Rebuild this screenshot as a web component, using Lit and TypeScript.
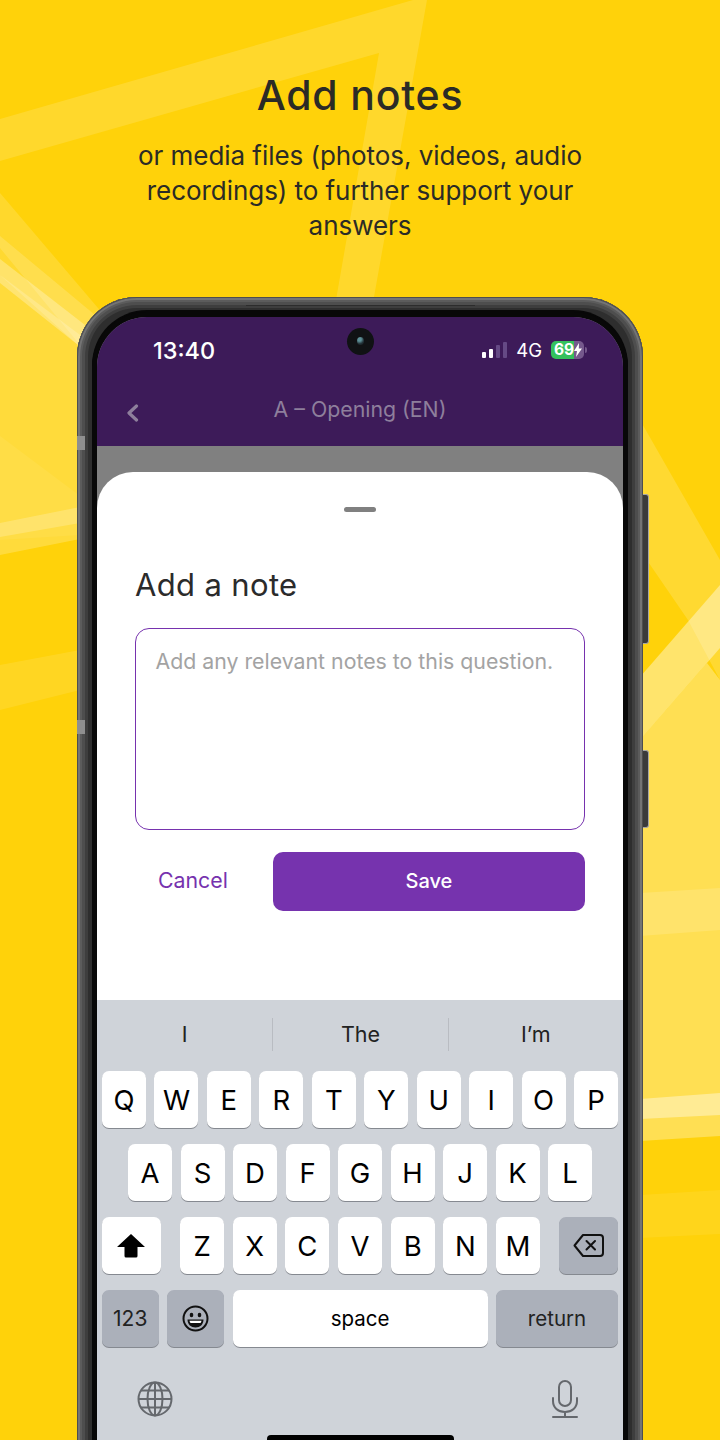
import { LitElement, html, css, svg } from "lit";
import { customElement } from "lit/decorators.js";

const ROW1 = ["Q", "W", "E", "R", "T", "Y", "U", "I", "O", "P"];
const ROW2 = ["A", "S", "D", "F", "G", "H", "J", "K", "L"];
const ROW3 = ["Z", "X", "C", "V", "B", "N", "M"];

const decor = svg`
  <g fill="#fff">
    <polygon opacity=".14" points="0,119 413,0 427,0 354,409 317,409 379,53 0,161"/>
    <polygon opacity=".14" points="0,193 184,409 133,409 0,248"/>
    <polygon opacity=".16" points="0,236 95,315 78,345 0,275"/>
    <polygon opacity=".28" points="0,259 85,325 78,345 0,283"/>
    <polygon opacity=".2" points="0,275 100,350 100,535 0,555"/>
    <polygon opacity=".06" points="0,436 80,496 80,535 0,540"/>
    <polygon opacity=".2" points="0,523 80,507 80,523 0,537"/>
    <polygon opacity=".1" points="0,665 80,650 80,690 0,710"/>
    <polygon opacity=".16" points="640,420 720,560 720,680 688,620 640,550"/>
    <polygon opacity=".4" points="640,677 720,585 720,648 640,740"/>
    <polygon opacity=".3" points="640,740 707,663 720,680 720,1136 640,1141"/>
    <polygon opacity=".14" points="640,893 720,888 720,930 640,936"/>
    <polygon opacity=".38" points="640,1099 720,1093 720,1115 640,1119"/>
    <polygon opacity=".07" points="640,1195 720,1190 720,1234 640,1238"/>
  </g>`;

@customElement("app-root")
export class AppRoot extends LitElement {
  static styles = css`
    :host {
      display: block;
      position: relative;
      width: 720px;
      height: 1440px;
      overflow: hidden;
      background: #ffd20a;
      font-family: "Inter", "Liberation Sans", sans-serif;
    }
    .decor { position: absolute; inset: 0; width: 720px; height: 1440px; }
    .intro {
      position: relative;
      height: 297px;
      box-sizing: border-box;
      padding-top: 70px;
      text-align: center;
      color: #2b2b26;
    }
    .intro h1 { margin: 0 0 18px; font-size: 41px; line-height: 50px; font-weight: 500; letter-spacing: 0.8px; }
    .intro p { margin: 0 auto; width: 480px; font-size: 26px; line-height: 35px; font-weight: 400; letter-spacing: -0.05px; }

    .phone {
      position: relative;
      margin-left: 77px;
      width: 566px;
      height: 1240px;
      box-sizing: border-box;
      padding: 20px 20px 0;
      border-radius: 60px;
      background: #2e2e2e;
      box-shadow:
        inset 0 0 0 1px #4e4e4e,
        inset 0 0 0 3px #747474,
        inset 0 0 0 5px #5c5c5c,
        inset 0 0 0 8px #4e4e4e,
        inset 0 0 0 11px #3e3e3e;
    }
    .btn-side { position: absolute; left: 566px; width: 5px; border: 1px solid #a5a5a5; border-left: 0; border-radius: 0 3px 3px 0; background: #3a3a3a; }
    .vol { top: 197px; height: 148px; }
    .pow { top: 453px; height: 76px; }
    .band { position: absolute; left: 0; width: 8px; height: 14px; background: #8f8f8f; }
    .b1 { top: 139px; }
    .b2 { top: 423px; }
    .seam { position: absolute; left: 169px; top: 8px; width: 229px; height: 1px; background: #2c2c2c; }

    .screen {
      position: relative;
      height: 100%;
      display: flex;
      flex-direction: column;
      border-radius: 50px 50px 0 0;
      background: #808080;
      box-shadow: 0 0 0 5px #080808, 0 -2px 0 5px #080808;
      overflow: hidden;
    }
    .top { background: #3d1b59; height: 129px; flex: none; }
    .status { display: flex; align-items: center; height: 66px; padding: 0 36px 0 56px; color: #fff; }
    .time { font-size: 23.5px; font-weight: 500; margin-right: auto; }
    .signal { display: flex; align-items: flex-end; gap: 3px; height: 16px; margin-right: 9px; }
    .signal i { display: block; width: 4px; border-radius: 1px; background: #fff; }
    .signal i.off { background: #69508a; opacity: .9; }
    .net { font-size: 18.5px; font-weight: 400; margin-right: 9px; }
    .batt {
      display: flex; align-items: center; width: 33px; height: 18px; box-sizing: border-box; padding-left: 3px;
      border-radius: 5px;
      background: linear-gradient(90deg, #34c15c 0 70%, #75598c 70% 100%);
      font-size: 15.5px; line-height: 18px; font-weight: 700; color: #fff;
    }
    .batt svg { flex: none; }
    .nub { width: 2px; height: 6px; margin-left: 1px; border-radius: 0 2px 2px 0; background: #75598c; }
    .nav { position: relative; display: flex; align-items: center; justify-content: center; height: 52px; color: #8e7f9c; font-size: 21.3px; }
    .back { position: absolute; left: 29px; top: 21px; }
    .camera { position: absolute; left: 249.500px; top: 11px; width: 27px; height: 27px; border-radius: 50%; background: #101214; }
    .camera::after { content: ""; position: absolute; left: 10px; top: 9px; width: 7px; height: 8px; border-radius: 50%; background: radial-gradient(circle at 35% 30%, #5d8f96 0 25%, #24343a 60%, transparent 100%); }

    .gap { height: 26px; flex: none; }
    .sheet {
      flex: none;
      height: 528px;
      box-sizing: border-box;
      padding: 35px 38px 0;
      background: #fff;
      border-radius: 36px 36px 0 0;
    }
    .handle { width: 32px; height: 5px; margin: 0 auto 53px; border-radius: 3px; background: #808080; }
    .sheet h2 { margin: 0 0 23px; font-size: 31px; line-height: 40px; font-weight: 400; color: #2b2b2b; letter-spacing: 0.35px; }
    .area {
      box-sizing: border-box;
      height: 202px;
      margin: 0 0 22px;
      padding: 18.500px 19.500px;
      border: 1.500px solid #7632ae;
      border-radius: 14px;
      font-size: 21.3px;
      line-height: 26px;
      color: #a3a3a3;
      white-space: nowrap;
    }
    .actions { display: flex; align-items: center; gap: 45px; }
    .cancel { margin-left: 23px; padding-bottom: 3px; font-size: 21.3px; color: #7632ae; }
    .save {
      flex: 1; height: 59px; box-sizing: border-box; padding-bottom: 2px; display: flex; align-items: center; justify-content: center;
      border-radius: 10px; background: #7633ae; color: #fff; font-size: 20px; font-weight: 500;
    }

    .kb { flex: 1; background: #cfd3d9; padding: 0 5px; color: #000; }
    .sugg { display: grid; grid-template-columns: repeat(3, 1fr); height: 71px; align-items: center; margin: 0 -5px; font-size: 21.5px; color: #222; text-align: center; }
    .sugg span { height: 33px; line-height: 33px; margin-top: -2px; }
    .sugg span + span { border-left: 1.500px solid #b9bcc2; }
    .row { display: flex; gap: 8.500px; height: 57px; margin-bottom: 16px; }
    .row.mid { padding: 0 26px; }
    .key {
      flex: 1 1 0; min-width: 0; display: flex; align-items: center; justify-content: center;
      border-radius: 7px; background: #fff; box-shadow: 0 1px 0 rgba(120,123,130,.85);
      font-size: 27.5px; font-weight: 400;
    }
    .key.mod { background: #abb0ba; }
    .shift { flex: none; width: 58.500px; margin-right: 11px; }
    .del { flex: none; width: 58.500px; margin-left: 11px; }
    .num { flex: none; width: 56.500px; font-size: 21px; color: #222; }
    .emoji { flex: none; width: 57px; }
    .space { flex: 1; font-size: 20.5px; }
    .ret { flex: none; width: 122px; font-size: 20.5px; color: #222; }
    .bottom { display: flex; justify-content: space-between; align-items: center; height: 40px; margin-top: 32px; padding: 0 39px 0 35px; }
    .home { width: 187px; height: 8px; margin: 16px auto 0; border-radius: 4px; background: #000; }
  `;

  private keys(list: string[]) {
    return list.map((k) => html`<div class="key">${k}</div>`);
  }

  render() {
    return html`
      <svg class="decor" viewBox="0 0 720 1440" aria-hidden="true">${decor}</svg>
      <header class="intro">
        <h1>Add notes</h1>
        <p>or media files (photos, videos, audio recordings) to further support your answers</p>
      </header>
      <div class="phone">
        <span class="btn-side vol"></span>
        <span class="btn-side pow"></span>
        <span class="band b1"></span>
        <span class="band b2"></span>
        <span class="seam"></span>
        <div class="screen">
          <div class="top">
            <div class="status">
              <span class="time">13:40</span>
              <span class="signal">
                <i style="height:6px"></i><i style="height:9px"></i><i class="off" style="height:13px"></i><i class="off" style="height:16px"></i>
              </span>
              <span class="net">4G</span>
              <span class="batt">69<svg width="8" height="14" viewBox="0 0 8 14"><path d="M5 0 0 8h3l-1 6 6-8.500H4.800z" fill="#fff"/></svg></span>
              <span class="nub"></span>
            </div>
            <div class="nav">
              <svg class="back" width="13" height="18" viewBox="0 0 13 18"><path d="M10.500 2 3 9l7.500 7" fill="none" stroke="#8e7f9c" stroke-width="3.200" stroke-linecap="round" stroke-linejoin="round"/></svg>
              A – Opening (EN)
            </div>
          </div>
          <span class="camera"></span>
          <div class="gap"></div>
          <section class="sheet">
            <div class="handle"></div>
            <h2>Add a note</h2>
            <div class="area">Add any relevant notes to this question.</div>
            <div class="actions">
              <span class="cancel">Cancel</span>
              <div class="save">Save</div>
            </div>
          </section>
          <section class="kb">
            <div class="sugg"><span>I</span><span>The</span><span>I’m</span></div>
            <div class="row">${this.keys(ROW1)}</div>
            <div class="row mid">${this.keys(ROW2)}</div>
            <div class="row">
              <div class="key shift">
                <svg width="30" height="25" viewBox="0 0 30 25"><path d="M15 1 1 14h7.500v9a1.500 1.500 0 0 0 1.500 1.500h10a1.500 1.500 0 0 0 1.500-1.500v-9H29z" fill="#000"/></svg>
              </div>
              ${this.keys(ROW3)}
              <div class="key mod del">
                <svg width="31" height="25" viewBox="0 0 31 25"><path d="M10 2h17a3 3 0 0 1 3 3v15a3 3 0 0 1-3 3H10L1.500 12.500z" fill="none" stroke="#111" stroke-width="2" stroke-linejoin="round"/><path d="m13.500 8 8.500 8.500M22 8l-8.500 8.500" stroke="#111" stroke-width="2" stroke-linecap="round"/></svg>
              </div>
            </div>
            <div class="row">
              <div class="key mod num">123</div>
              <div class="key mod emoji">
                <svg width="27" height="27" viewBox="0 0 27 27"><circle cx="13.500" cy="13.500" r="12" fill="none" stroke="#111" stroke-width="2"/><ellipse cx="9.500" cy="10" rx="1.800" ry="2.300" fill="#111"/><ellipse cx="17.500" cy="10" rx="1.800" ry="2.300" fill="#111"/><path d="M5.500 14.500h16c0 5-3.500 8-8 8s-8-3-8-8z" fill="#111"/><path d="M7.500 15.800h12c-.2 1-.5 1.600-1 2.200h-10c-.5-.6-.8-1.200-1-2.200z" fill="#fff"/></svg>
              </div>
              <div class="key space">space</div>
              <div class="key mod ret">return</div>
            </div>
            <div class="bottom">
              <svg width="36" height="36" viewBox="0 0 36 36" fill="none" stroke="#65686d" stroke-width="2"><circle cx="18" cy="18" r="16.500"/><ellipse cx="18" cy="18" rx="7.500" ry="16.500"/><path d="M18 1.500v33M1.500 18h33M4 9.500h28M4 26.500h28"/></svg>
              <svg width="28" height="38" viewBox="0 0 28 38" fill="none" stroke="#65686d" stroke-width="2"><rect x="8" y="1" width="12" height="25" rx="6"/><path d="M2 18v3c0 6.500 5 11 12 11s12-4.500 12-11v-3M14 32v5M2 37h24" stroke-linecap="round"/></svg>
            </div>
            <div class="home"></div>
          </section>
        </div>
      </div>
    `;
  }
}
